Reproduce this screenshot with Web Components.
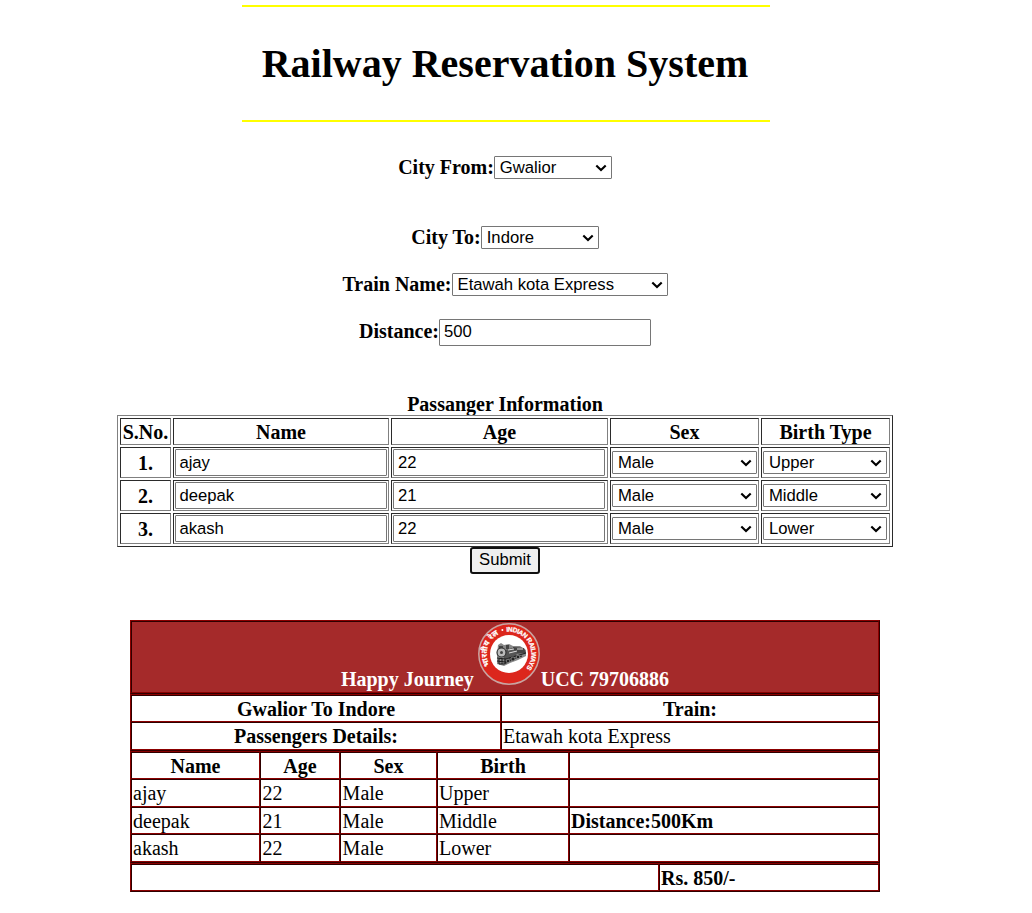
<!DOCTYPE html>
<html lang="en">
<head>
<meta charset="utf-8">
<title>Railway Reservation System</title>
<style>
body{margin:0;background:#fff;color:#000;font:20px/23px "Liberation Serif","Times New Roman",serif}
</style>
</head>
<body>
<railway-page></railway-page>
<script>
const define=(name,html,setup)=>{
  const t=document.createElement('template');t.innerHTML=html;
  customElements.define(name,class extends HTMLElement{
    constructor(){super();this.attachShadow({mode:'open'}).append(t.content.cloneNode(true));}
    connectedCallback(){if(setup)setup(this,this.shadowRoot);}
  });
};

define('rail-select',`<style>
:host{display:inline-grid;box-sizing:border-box;height:23px;grid-template:100% / 100%}
select{grid-area:1/1;appearance:none;box-sizing:border-box;width:100%;height:100%;margin:0;border:1px solid #767676;border-radius:1px;background:#fff;color:#000;padding:0 0 0 5px;font:16.667px/19px "Liberation Sans",Arial,sans-serif}
svg{grid-area:1/1;justify-self:end;align-self:center;margin-right:5px;pointer-events:none}
</style><select><option></option></select>
<svg width="12" height="8" viewBox="0 0 12 8"><path d="M1.3 1.4 6 6.1 10.7 1.4" fill="none" stroke="#000" stroke-width="2.1"/></svg>`,
(h,r)=>{r.querySelector('option').textContent=h.getAttribute('value');h.style.width=h.getAttribute('w')+'px';});

define('rail-input',`<style>
:host{display:inline-block;width:212px;height:27px}
input{display:block;box-sizing:border-box;width:100%;height:100%;margin:0;border:1px solid #767676;border-radius:1px;padding:var(--input-pad,0 4px 1px);background:#fff;color:#000;font:16.667px/19px "Liberation Sans",Arial,sans-serif}
</style><input>`,(h,r)=>{r.querySelector('input').value=h.getAttribute('value');});

define('form-row',`<style>
:host{display:flex;justify-content:center;align-items:center;font-weight:bold}
span{padding-bottom:var(--label-lift,0)}
</style><span><slot name="label"></slot></span><slot></slot>`);

define('page-title',`<style>
:host{display:block;width:527.5px;margin-left:242px;border-top:2px solid #ff0;border-bottom:2px solid #ff0;height:113px}
h1{margin:0 1.5px 0 0;font-size:40px;line-height:46px;padding-top:34px;text-align:center;white-space:nowrap}
</style><h1><slot></slot></h1>`);

define('passenger-table',`<style>
:host{display:grid;box-sizing:border-box;width:776px;height:132px;margin:0 auto;padding:2px;gap:2px;border:1px solid;border-color:#808080 #2b2b2b #2b2b2b #808080;grid-template-columns:51px 216px 217px 149px 129px;grid-template-rows:27px repeat(3,31px)}
::slotted(*){box-sizing:border-box;border:1px solid;border-color:#2b2b2b #808080 #808080 #2b2b2b;display:flex;align-items:center;padding:0 1px}
::slotted(b){justify-content:center;padding-top:2px}
</style><slot></slot>`);

define('submit-button',`<style>
:host{display:flex;justify-content:center}
button{box-sizing:border-box;width:70px;height:27px;margin:0;padding:0 0 2px;border:2px solid #101010;border-radius:3px;background:#efefef;color:#000;font:16.667px/19px "Liberation Sans",Arial,sans-serif}
</style><button><slot></slot></button>`);

define('ticket-grid',`<style>
:host{display:grid;box-sizing:border-box;width:750px;border:1px solid;border-color:#8b0000 #2e0000 #2e0000 #8b0000}
::slotted(*){box-sizing:border-box;border:1px solid;border-color:#2e0000 #8b0000 #8b0000 #2e0000;display:flex;align-items:flex-start;padding:2px 1px 0}
::slotted(.c){justify-content:center;font-weight:bold}
::slotted(.b){font-weight:bold}
::slotted(.n){padding-left:1.6px}
::slotted(.head){background:#a52a2a;color:#fff;padding-top:0;align-items:flex-end;justify-content:center;font-weight:bold}
</style><slot></slot>`,(h)=>{h.style.gridTemplateColumns=h.getAttribute('cols');h.style.gridTemplateRows=h.getAttribute('rows');});

define('railway-logo',`<style>:host{display:block;width:62px;height:62px}svg{display:block}text{font-family:"Liberation Sans",Arial,sans-serif;font-weight:bold;fill:#fff}</style>
<svg width="62" height="62" viewBox="-31 -31 62 62">
<circle r="30.2" fill="#dc261c" stroke="#c9a5a2" stroke-width="1.5"/>
<circle r="19" fill="#fff"/>
<defs><path id="ring" d="M0 22.3A22.3 22.3 0 0 1 0-22.3A22.3 22.3 0 0 1 0 22.3"/></defs>
<text font-size="6.6" stroke="#fff" stroke-width=".25"><textPath href="#ring" startOffset="67" textLength="53">INDIAN RAILWAYS</textPath></text>
<text font-size="7.6" stroke="#fff" stroke-width=".25" style="font-family:'Noto Sans','Noto Sans Devanagari',sans-serif"><textPath href="#ring" startOffset="23" textLength="36">भारतीय रेल</textPath></text>
<circle cx="-6.6" cy="-24" r="1" fill="#fff"/>
<g>
<path d="M-11-9-8-11-5-9 0-10 4-8 11-8 17-4 17 2 9 6 1 9-5 12-12 10-12 1Z" fill="#888"/>
<path d="M-10-8h4v6h-4ZM-3-9h3v4h-3ZM4-7l11 1 2 5-13 1Z" fill="#444"/>
<path d="M-7-3 3-6 8-2 7 3-4 8Z" fill="#555"/>
<circle cx="-7.5" cy="-1.5" r="4.5" fill="#bbb" stroke="#333" stroke-width="1.2"/>
<circle cx="-7.5" cy="-1.5" r="1.5" fill="#444"/>
<path d="M-12 4-3 5 17-1M-12 7-4 8 13 2M-10 10l5 0 8-4M-10 4v6M-7 4v6M-4 5v5" fill="none" stroke="#222" stroke-width="1.1"/>
<path d="M-1-4 5-5M0-1l8-2M8-5h6" fill="none" stroke="#ddd"/>
<circle cx="-1" cy="7" r="1.8" fill="#222" stroke="#aaa" stroke-width=".6"/><circle cx="4" cy="5" r="2" fill="#222" stroke="#aaa" stroke-width=".6"/><circle cx="9" cy="3" r="1.8" fill="#222" stroke="#aaa" stroke-width=".6"/>
</g></svg>`);

define('journey-ticket',`<style>
:host{display:block;width:750px;margin:0 auto}
.bar{display:flex;align-items:flex-end;height:70px}
.bar span{padding-bottom:1px}
railway-logo{margin:0 1px 7px 4px}
</style>
<ticket-grid cols="1fr" rows="72px"><div class="head"><div class="bar"><span>Happy Journey</span><railway-logo></railway-logo><span>UCC 79706886</span></div></div></ticket-grid>
<ticket-grid cols="370px 378px" rows="27px 28px"><div class="c">Gwalior To Indore</div><div class="c">Train:</div><div class="c">Passengers Details:</div><div>Etawah kota Express</div></ticket-grid>
<ticket-grid cols="129px 80px 97px 132px 310px" rows="27px 28px 27px 28px">
<div class="c">Name</div><div class="c">Age</div><div class="c">Sex</div><div class="c">Birth</div><div></div>
<div>ajay</div><div class="n">22</div><div class="n">Male</div><div>Upper</div><div></div>
<div>deepak</div><div class="n">21</div><div class="n">Male</div><div>Middle</div><div class="b">Distance:500Km</div>
<div>akash</div><div class="n">22</div><div class="n">Male</div><div>Lower</div><div></div></ticket-grid>
<ticket-grid cols="528px 220px" rows="27px"><div></div><div class="b">Rs. 850/-</div></ticket-grid>`);

const rows=[['ajay','22','Upper'],['deepak','21','Middle'],['akash','22','Lower']];
define('railway-page',`<style>
:host{display:flex;flex-direction:column;box-sizing:border-box;width:1010px;padding-top:5px}
.r1{margin-top:34px;height:23px}.r2{margin-top:47px;height:23px}.r3{margin-top:24px;height:23px}.r4{margin-top:23px;height:27px;--label-lift:2px}
.caption{text-align:center;font-weight:bold;margin-top:47px;height:22px}
passenger-table{--input-pad:0 4px}
.name{--input-pad:0 3.4px}
journey-ticket{margin-top:46px}
</style>
<page-title>Railway Reservation System</page-title>
<form-row class="r1"><span slot="label">City From:</span><rail-select w="118" value="Gwalior"></rail-select></form-row>
<form-row class="r2"><span slot="label">City To:</span><rail-select w="118" value="Indore"></rail-select></form-row>
<form-row class="r3"><span slot="label">Train Name:</span><rail-select w="216" value="Etawah kota Express"></rail-select></form-row>
<form-row class="r4"><span slot="label">Distance:</span><rail-input value="500"></rail-input></form-row>
<div class="caption">Passanger Information</div>
<passenger-table><b>S.No.</b><b>Name</b><b>Age</b><b>Sex</b><b>Birth Type</b>
${rows.map((p,i)=>`<b>${i+1}.</b><div class="name"><rail-input value="${p[0]}"></rail-input></div><div><rail-input value="${p[1]}"></rail-input></div><div><rail-select w="145" value="Male"></rail-select></div><div><rail-select w="124" value="${p[2]}"></rail-select></div>`).join('')}</passenger-table>
<submit-button>Submit</submit-button>
<journey-ticket></journey-ticket>`);
</script>
</body>
</html>
